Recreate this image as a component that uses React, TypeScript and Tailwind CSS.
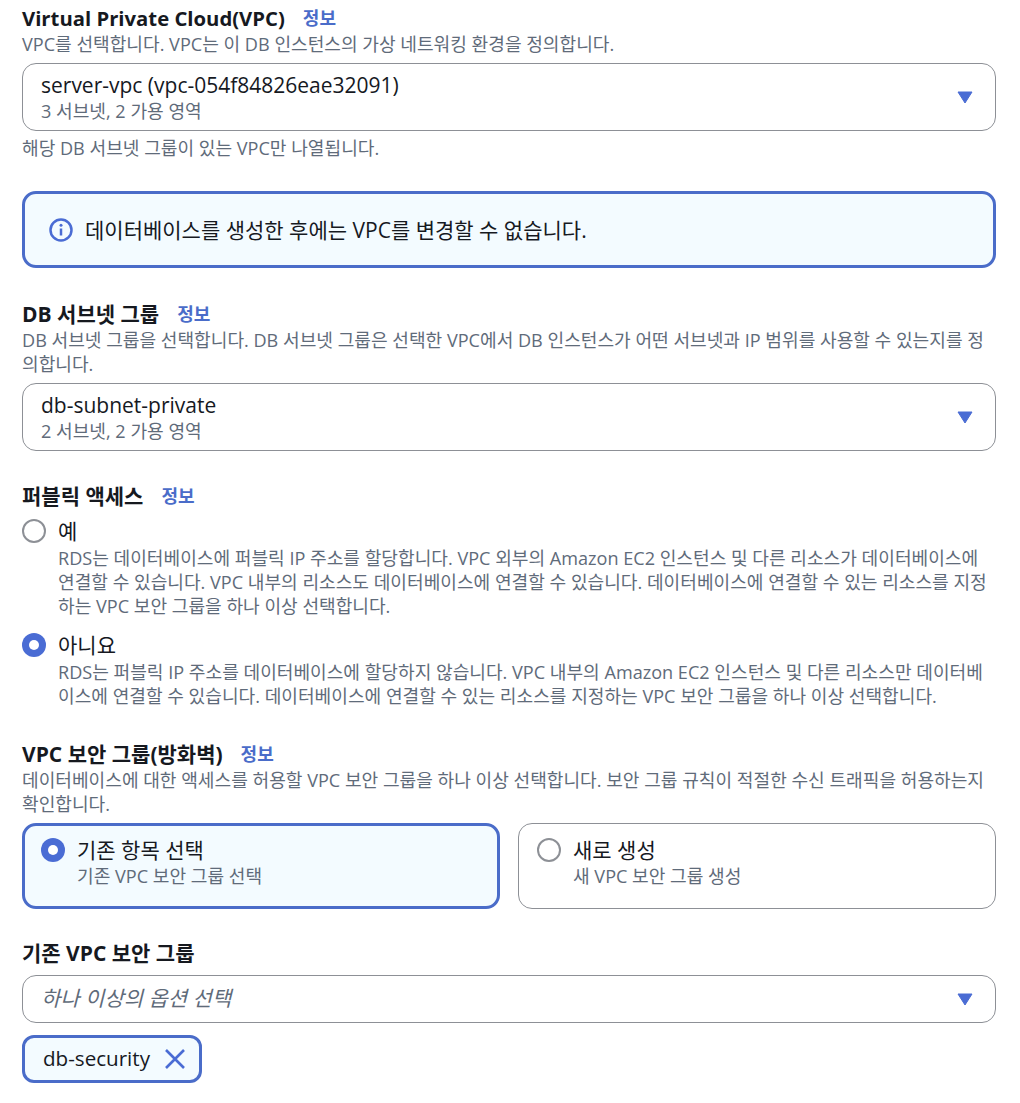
const font = 'font-["Open_Sans","Noto_Sans_CJK_KR",sans-serif]';

const Label = ({ text, info, size = 'text-[21px]' }: { text: string; info?: boolean; size?: string }) => (
  <div className={`flex h-[26px] items-center ${size} leading-[26px] font-bold text-[#16191f]`}>
    {text}
    {info && <span className="ml-[18px] text-[18px] font-bold text-[#4a6cc9]">정보</span>}
  </div>
);

const Desc = ({ children }: { children: React.ReactNode }) => (
  <p className="text-[18.1px] leading-[24px] text-[#5f6b7a]">{children}</p>
);

const Caret = () => (
  <svg width="16" height="13" viewBox="0 0 16 13" className="shrink-0">
    <path d="M1 1h14L8 12z" fill="#4a6cd4" stroke="#4a6cd4" strokeWidth="1" strokeLinejoin="round" />
  </svg>
);

const Select = ({ title, sub }: { title: string; sub: string }) => (
  <div className="flex h-[68px] items-center justify-between rounded-[14px] border border-[#8d9096] bg-white pr-[22px] pl-[18px]">
    <div>
      <div className="text-[21px] leading-[28px] text-[#16191f]">{title}</div>
      <div className="text-[18.1px] leading-[24px] text-[#5f6b7a]">{sub}</div>
    </div>
    <Caret />
  </div>
);

const Radio = ({ on }: { on?: boolean }) =>
  on ? (
    <span className="flex h-[24px] w-[24px] shrink-0 items-center justify-center rounded-full bg-[#4a6cd4]">
      <span className="h-[10px] w-[10px] rounded-full bg-white" />
    </span>
  ) : (
    <span className="block h-[24px] w-[24px] shrink-0 rounded-full border-2 border-[#8d9096] bg-white" />
  );

const RadioRow = ({ on, title, children }: { on?: boolean; title: string; children: React.ReactNode }) => (
  <div className="flex gap-[12px]">
    <div className="pt-[2px]">
      <Radio on={on} />
    </div>
    <div>
      <div className="mb-[1px] text-[21px] leading-[28px] text-[#16191f]">{title}</div>
      <Desc>{children}</Desc>
    </div>
  </div>
);

const Tile = ({ on, title, sub }: { on?: boolean; title: string; sub: string }) => (
  <div
    className={`flex h-[86px] gap-[12px] rounded-[14px] ${
      on ? 'border-[3px] border-[#4a6cc9] bg-[#f3fbff] pt-[12px] pl-[16px]' : 'border border-[#8d9096] bg-white pt-[14px] pl-[18px]'
    }`}
  >
    <Radio on={on} />
    <div className="-mt-[2px]">
      <div className="text-[21px] leading-[28px] text-[#16191f]">{title}</div>
      <div className="text-[18.1px] leading-[24px] text-[#5f6b7a]">{sub}</div>
    </div>
  </div>
);

export default function App() {
  return (
    <div className={`${font} min-h-[1103px] bg-white pt-[5px] pr-[24px] pl-[22px]`}>
      <Label text="Virtual Private Cloud(VPC)" info size="text-[20.3px]" />
      <div className="mt-[1px]">
        <Desc>VPC를 선택합니다. VPC는 이 DB 인스턴스의 가상 네트워킹 환경을 정의합니다.</Desc>
      </div>
      <div className="mt-[7px]">
        <Select title="server-vpc (vpc-054f84826eae32091)" sub="3 서브넷, 2 가용 영역" />
      </div>
      <div className="mt-[5px]">
        <Desc>해당 DB 서브넷 그룹이 있는 VPC만 나열됩니다.</Desc>
      </div>

      <div className="mt-[31px] flex h-[77px] items-center gap-[12px] rounded-[14px] border-[3px] border-[#4a6cc9] bg-[#f3fbff] pl-[24px]">
        <svg width="24" height="24" viewBox="0 0 24 24" className="shrink-0">
          <circle cx="12" cy="12" r="10.5" fill="none" stroke="#4a6cd4" strokeWidth="2.5" />
          <path d="M12 10.5v7" stroke="#4a6cd4" strokeWidth="2.5" />
          <circle cx="12" cy="7.2" r="1.5" fill="#4a6cd4" />
        </svg>
        <span className="text-[21px] leading-[28px] text-[#16191f]">
          데이터베이스를 생성한 후에는 VPC를 변경할 수 없습니다.
        </span>
      </div>

      <div className="mt-[33px]">
        <Label text="DB 서브넷 그룹" info />
      </div>
      <div className="mt-[1px]">
        <Desc>
          DB 서브넷 그룹을 선택합니다. DB 서브넷 그룹은 선택한 VPC에서 DB 인스턴스가 어떤 서브넷과 IP 범위를 사용할 수 있는지를 정
          <br />
          의합니다.
        </Desc>
      </div>
      <div className="mt-[7px]">
        <Select title="db-subnet-private" sub="2 서브넷, 2 가용 영역" />
      </div>

      <div className="mt-[32px]">
        <Label text="퍼블릭 액세스" info />
      </div>
      <div className="mt-[8px]">
        <RadioRow title="예">
          RDS는 데이터베이스에 퍼블릭 IP 주소를 할당합니다. VPC 외부의 Amazon EC2 인스턴스 및 다른 리소스가 데이터베이스에
          <br />
          연결할 수 있습니다. VPC 내부의 리소스도 데이터베이스에 연결할 수 있습니다. 데이터베이스에 연결할 수 있는 리소스를 지정
          <br />
          하는 VPC 보안 그룹을 하나 이상 선택합니다.
        </RadioRow>
      </div>
      <div className="mt-[13px]">
        <RadioRow on title="아니요">
          RDS는 퍼블릭 IP 주소를 데이터베이스에 할당하지 않습니다. VPC 내부의 Amazon EC2 인스턴스 및 다른 리소스만 데이터베
          <br />
          이스에 연결할 수 있습니다. 데이터베이스에 연결할 수 있는 리소스를 지정하는 VPC 보안 그룹을 하나 이상 선택합니다.
        </RadioRow>
      </div>

      <div className="mt-[33px]">
        <Label text="VPC 보안 그룹(방화벽)" info />
      </div>
      <div className="mt-[1px]">
        <Desc>
          데이터베이스에 대한 액세스를 허용할 VPC 보안 그룹을 하나 이상 선택합니다. 보안 그룹 규칙이 적절한 수신 트래픽을 허용하는지
          <br />
          확인합니다.
        </Desc>
      </div>
      <div className="mt-[7px] grid grid-cols-2 gap-[18px]">
        <Tile on title="기존 항목 선택" sub="기존 VPC 보안 그룹 선택" />
        <Tile title="새로 생성" sub="새 VPC 보안 그룹 생성" />
      </div>

      <div className="mt-[31px]">
        <Label text="기존 VPC 보안 그룹" />
      </div>
      <div className="mt-[9px] flex h-[48px] items-center justify-between rounded-[14px] border border-[#8d9096] bg-white pr-[22px] pl-[18px]">
        <span className="text-[21px] text-[#5f6b7a] italic">하나 이상의 옵션 선택</span>
        <Caret />
      </div>
      <div className="mt-[12px] inline-flex h-[48px] items-center gap-[14px] rounded-[12px] border-[3px] border-[#4a6cc9] bg-[#f3fbff] pr-[13px] pl-[18px]">
        <span className="-mt-[2px] text-[20.6px] text-[#16191f]">db-security</span>
        <svg width="22" height="22" viewBox="0 0 22 22" className="shrink-0">
          <path d="M2 2l18 18M20 2L2 20" stroke="#4a6cd4" strokeWidth="2.6" />
        </svg>
      </div>
    </div>
  );
}
